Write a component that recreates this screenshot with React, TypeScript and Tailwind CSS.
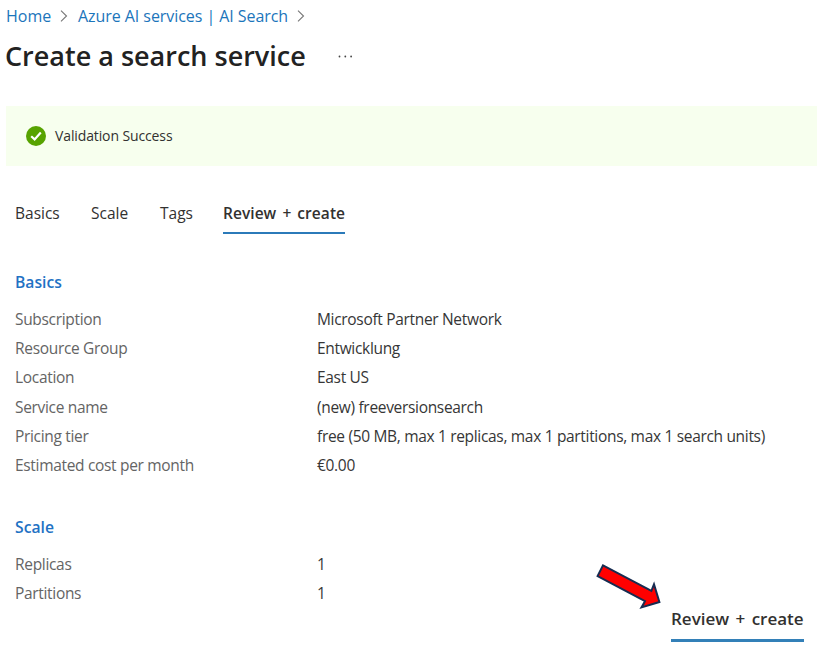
import React from "react";

const basics: [string, string][] = [
  ["Subscription", "Microsoft Partner Network"],
  ["Resource Group", "Entwicklung"],
  ["Location", "East US"],
  ["Service name", "(new) freeversionsearch"],
  ["Pricing tier", "free (50 MB, max 1 replicas, max 1 partitions, max 1 search units)"],
  ["Estimated cost per month", "€0.00"],
];

const scale: [string, string][] = [
  ["Replicas", "1"],
  ["Partitions", "1"],
];

function Chevron() {
  return (
    <svg className="h-3 w-2" viewBox="0 0 8 12" fill="none" stroke="#777" strokeWidth="1.1">
      <path d="M1 0.7L6.5 6L1 11.3" />
    </svg>
  );
}

function Section({ title, rows }: { title: string; rows: [string, string][] }) {
  return (
    <section className="pl-[15px]">
      <h2 className="text-[15.7px] leading-5 font-semibold text-[#1f72c4]">{title}</h2>
      <dl className="mt-[12.4px] mb-[0.6px] tracking-[-0.32px]">
        {rows.map(([label, value]) => (
          <div key={label} className="flex h-[29.2px] items-center whitespace-nowrap">
            <dt className="w-[302px] shrink-0 text-[#646464]">{label}</dt>
            <dd className="text-[#363636]">{value}</dd>
          </div>
        ))}
      </dl>
    </section>
  );
}

export default function App() {
  return (
    <div className="relative h-[646px] w-[817px] overflow-hidden bg-white font-['Open_Sans','Noto_Sans',sans-serif] text-[15.5px] leading-5 text-[#323130]">
      <nav className="flex h-8 items-center whitespace-nowrap pl-[6px] text-[16px] text-[#1b75bb]">
        <a className="w-[45px]">Home</a>
        <span className="ml-[9px] mr-[10px] flex"><Chevron /></span>
        <a className="w-[210px] tracking-[-0.06px]">Azure AI services | AI Search</a>
        <span className="ml-[9px] flex"><Chevron /></span>
      </nav>
      <header className="flex h-12 items-center pl-[5px]">
        <h1 className="w-[333px] whitespace-nowrap text-[27px] font-semibold text-[#222]">Create a search service</h1>
        <svg className="h-[3px] w-[15px]" viewBox="0 0 15 3" fill="#444">
          <circle cx="1.5" cy="1.5" r="0.9" />
          <circle cx="7.3" cy="1.5" r="0.9" />
          <circle cx="13.1" cy="1.5" r="0.9" />
        </svg>
      </header>
      <div className="ml-[6px] mt-[26px] flex h-[60px] items-center bg-[#f7ffee] pl-5 text-[14px]">
        <svg className="mr-[9px] size-5" viewBox="0 0 20 20">
          <circle cx="10" cy="10" r="10" fill="#57a300" />
          <path d="M5.2 10.2L8.6 13.4L14.8 6.4" fill="none" stroke="#fff" strokeWidth="2.2" />
        </svg>
        <span className="tracking-[-0.12px]">Validation Success</span>
      </div>
      <div className="mt-[37px] flex h-[31px] pl-[15px]">
        <span className="w-[76px]">Basics</span>
        <span className="w-[69px]">Scale</span>
        <span className="w-[63px]">Tags</span>
        <span className="w-[122px] whitespace-nowrap border-b-2 border-[#2b7ab9] font-semibold tracking-[0.05px] [word-spacing:2px]">Review + create</span>
      </div>
      <div className="mt-[38px]">
        <Section title="Basics" rows={basics} />
      </div>
      <div className="mt-[37.8px]">
        <Section title="Scale" rows={scale} />
      </div>
      <button className="absolute left-[671px] top-[608px] h-[34px] w-[133px] whitespace-nowrap border-b-[3px] border-[#3380b8] pb-[11px] text-left text-[17px] font-semibold leading-[22px] [word-spacing:2px]">
        Review + create
      </button>
      <svg className="absolute left-[594px] top-[562px] h-[50px] w-[70px]" viewBox="594 562 70 50">
        <path d="M603 565.4L651.4 590.8L654 584.2L659.4 602L641.5 607.4L645 601.2L597.6 576.1Z" fill="#f00" stroke="#172c51" strokeWidth="2" />
      </svg>
    </div>
  );
}
